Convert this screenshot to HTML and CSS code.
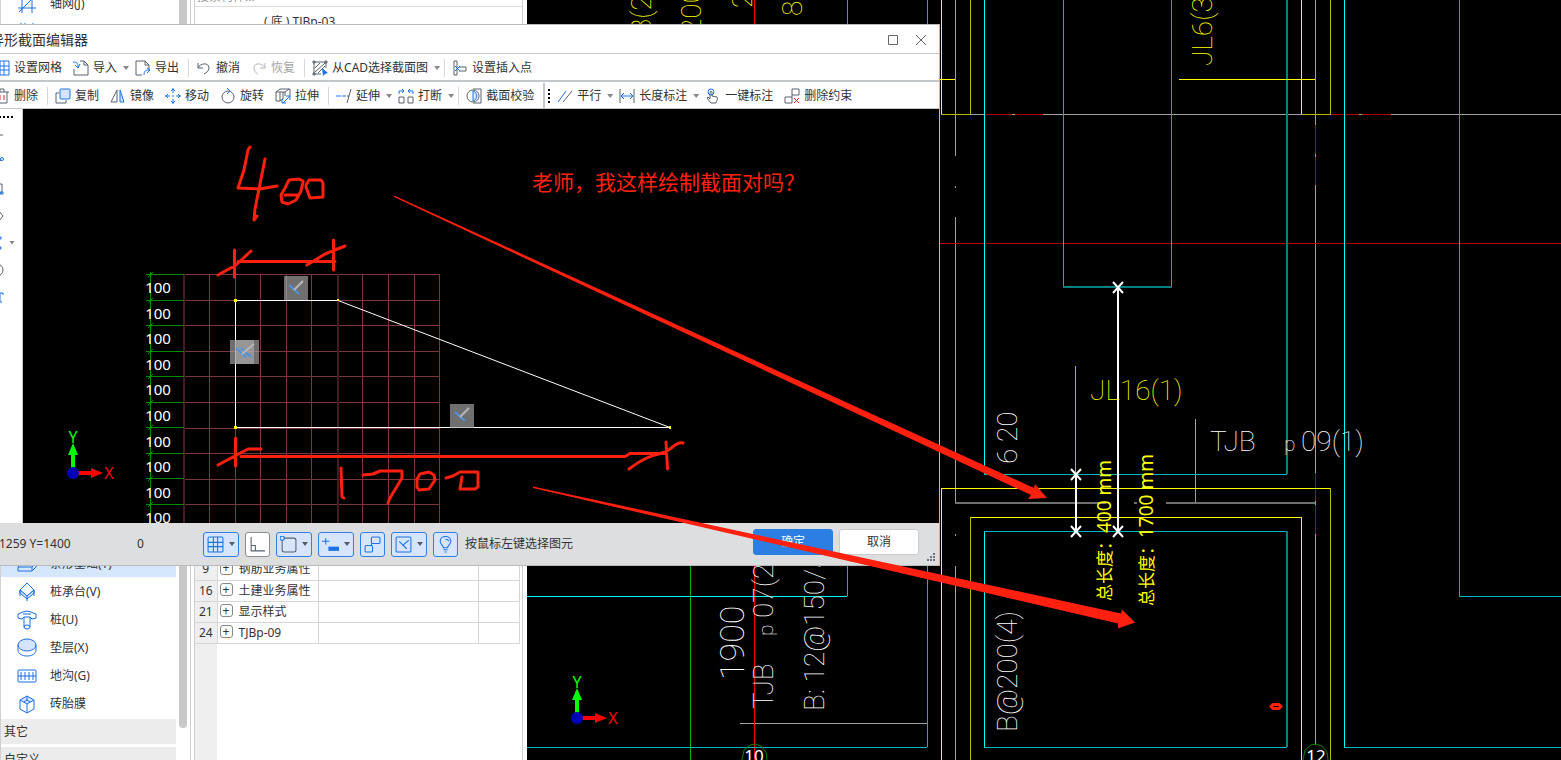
FILE: index.html
```
<!DOCTYPE html>
<html lang="zh-CN">
<head>
	<meta charset="utf-8">
	<meta name="viewport" content="width=device-width, initial-scale=1">
	<title>异形截面编辑器</title>
	<link rel="stylesheet" href="styles.css">
</head>
<body>
	<div class="app">
		<!-- component list -->
		<nav class="side">
			<div class="side-list">
				<button class="side-item"><svg class="ico-lg" viewBox="0 0 20 20"><path d="M1 5h18M1 14h18M5 0v19M15 0v19M2 18L18 2"/></svg>轴网(J)</button>
				<div class="side-item"><svg class="ico-lg" viewBox="0 0 20 20"><path d="M4 1v18M8 1v18M16 1v18M1 6h18"/></svg></div>
				<div class="side-gap"></div>
				<button class="side-item on"><svg class="ico-lg" viewBox="0 0 20 20"><path d="M1 13h14v4H1zM15 13l4-4v4l-4 4M1 13l4-4h14"/></svg>条形基础(T)</button>
				<button class="side-item"><svg class="ico-lg" viewBox="0 0 20 20"><path d="M10 1l7 7-7 6-7-6z"/><path class="tint" d="M3 8l7 6 7-6v3l-7 6-7-6z"/><path d="M3 8v6M17 8v6M10 14v5"/></svg>桩承台(V)</button>
				<button class="side-item"><svg class="ico-lg" viewBox="0 0 20 20"><path d="M1 4l5-2 4-1 4 1 5 2v4l-4 1-2-2H7L5 9 1 8zM6 4h8M7 7v10M13 7v10"/><ellipse cx="10" cy="17" rx="3" ry="2"/></svg>桩(U)</button>
				<button class="side-item"><svg class="ico-lg" viewBox="0 0 20 20"><ellipse class="tint" cx="10" cy="7" rx="9" ry="6"/><path d="M1 7v5c0 8 18 8 18 0V7"/></svg>垫层(X)</button>
				<button class="side-item"><svg class="ico-lg" viewBox="0 0 20 20"><rect x="1" y="4" width="18" height="12" rx="1"/><path d="M1 10h18M4 6v8M8 6v8M12 6v8M16 6v8"/></svg>地沟(G)</button>
				<button class="side-item"><svg class="ico-lg" viewBox="0 0 20 20"><path class="tint" d="M10 2l7 4-7 4-7-4z"/><path d="M3 6v9l7 4 7-4V6M10 10v9M10 2v4l-3 2M10 6l3 2"/></svg>砖胎膜</button>
				<div class="side-group">其它</div>
				<div class="side-group">自定义</div>
			</div>
			<div class="side-scroll"></div>
		</nav>

		<!-- component tree and properties -->
		<section class="props">
			<input class="search" type="text" placeholder="搜索构件..." aria-label="搜索构件">
			<div class="tree-item">( 底 ) TJBp-03</div>
			<div class="prop-wrap">
				<table class="prop-table">
					<tr><th>9</th><td class="name"><button class="plus">+</button>钢筋业务属性</td><td></td><td class="last"></td></tr>
					<tr><th>16</th><td class="name"><button class="plus">+</button>土建业务属性</td><td></td><td class="last"></td></tr>
					<tr><th>21</th><td class="name"><button class="plus">+</button>显示样式</td><td></td><td class="last"></td></tr>
					<tr><th>24</th><td class="name"><button class="plus">+</button>TJBp-09</td><td></td><td class="last"></td></tr>
				</table>
			</div>
		</section>

		<!-- plan drawing -->
		<main class="plan">
			<svg class="draw">
				<g transform="translate(-527,0)" shape-rendering="crispEdges">
					<g class="gray">
						<path d="M955.500 0V156M955.500 186v2M955.500 217V503M955.500 534v2M955.500 566V760M1315.500 0V745"/>
						<path d="M956 114.500H1561M740 723.500H927M1195.500 419V503"/>
						<path class="thick" d="M955 503H1106M1134 503h3M1166 503H1315"/>
					</g>
					<g class="dred">
						<path d="M985 114.500h27M1015 114.500h28M1331 114.500h28M1362 114.500h29M940 243.500H1561"/>
						<path d="M1315.500 125v29M1315.500 157v28M1315.500 473v28M1315.500 505v29"/>
						<path class="bright" d="M754.500 0V760"/>
					</g>
					<path class="green" d="M690.500 560V760"/>
					<g class="cyan">
						<path d="M984.500 0V474M1344.500 0V747M984.500 531V747M527 596.500H847"/>
						<path class="dim" d="M847.500 0V596M927.500 0V747M527 747.500H927M1063.500 0V287M1171.500 0V287M984 474.500H1287M984 531.500H1287M984 747.500H1287M1344 747.500H1561M1459.500 0V596M1459 596.500H1561"/>
						<path class="teal" d="M1063 287H1172M1287 0V474M1287 531V747"/>
					</g>
					<g class="yellow">
						<path d="M941.500 0V114M1301.500 0V114M940 79.500H955M1179 79.500H1315M941.500 760V488.500H1330M970 517.500H1301.500V760"/>
						<path class="dim" d="M970.500 0V114M1330.500 0V114M941 114.500H970M1301 114.500H1330M1330.500 488V760M970.500 517V760M1075.500 366V531"/>
					</g>
					<path class="measure" d="M1118 287V531M1076 474V531"/>
				</g>
				<g transform="translate(-527,0)">
					<path class="measure" d="M1113 282l10 11M1123 282l-10 11M1113 526l10 11M1123 526l-10 11M1071 469l10 11M1081 469l-10 11M1071 526l10 11M1081 526l-10 11"/>
					<path class="bubble" d="M742 760l2-10 6-5 5-1 6 2 5 6 1 8M1303 760l2-10 6-5 5-1 6 2 5 6 1 8"/>
					<text class="num" x="754" y="762">10</text>
					<text class="num" x="1316" y="762">12</text>

					<text class="cad y" x="1090" y="400">JL16(1)</text>
					<text class="cad" x="1210" y="451">TJB</text>
					<text class="cad sm" x="1284" y="451">p</text>
					<text class="cad" x="1301" y="451">09(1)</text>
					<text class="cad y" transform="translate(1212,66) rotate(-90)">JL6(3</text>
					<text class="cad" transform="translate(1017,464) rotate(-90)">6 20</text>
					<text class="cad" transform="translate(1017,732) rotate(-90)">B@200(4)</text>
					<text class="cad big" transform="translate(744,680) rotate(-90)">1900</text>
					<text class="cad" transform="translate(773,709) rotate(-90)">TJB</text>
					<text class="cad sm" transform="translate(773,636) rotate(-90)">p</text>
					<text class="cad" transform="translate(773,618) rotate(-90)">07(2</text>
					<text class="cad" transform="translate(824,711) rotate(-90)">B: 12@150/5</text>
					<text class="cad y" transform="translate(651,34) rotate(-90)">3(2</text>
					<text class="cad y" transform="translate(701,34) rotate(-90)">200</text>
					<text class="cad y" transform="translate(752,8) rotate(-90)">2</text>
					<text class="cad y" transform="translate(802,16) rotate(-90)">8</text>
					<text class="len" transform="translate(1111,601) rotate(-90)">总长度：<tspan class="mm">400 mm</tspan></text>
					<text class="len" transform="translate(1153,606) rotate(-90)">总长度：<tspan class="mm">1700 mm</tspan></text>

					<g transform="translate(577,718)">
						<path class="ay" d="M-2 0v-18h-3l5-12 5 12h-3V0z"/>
						<path class="ax" d="M0-2h18v-3l12 5-12 5V2H0z"/>
						<circle class="ao" r="6"/>
						<text class="ay-t" x="0" y="-30">Y</text>
						<text class="ax-t" x="36" y="6">X</text>
					</g>
				</g>
			</svg>
		</main>
	</div>

	<!-- section editor window -->
	<div class="dialog" role="dialog" aria-label="异形截面编辑器">
		<header class="title">
			<span>异形截面编辑器</span>
			<div class="win-btns">
				<button aria-label="最大化"><svg viewBox="0 0 12 12"><path d="M1.500 1.500h9v9h-9z"/></svg></button>
				<button aria-label="关闭"><svg viewBox="0 0 12 12"><path d="M1 1l10 10M11 1L1 11"/></svg></button>
			</div>
		</header>

		<div class="bar">
			<button class="tool"><svg class="ico" viewBox="0 0 16 16"><path class="b" d="M1 1h14v14H1zM1 6h14M1 10h14M6 1v14M10 1v14"/></svg>设置网格</button>
			<button class="tool drop"><svg class="ico" viewBox="0 0 16 16"><path d="M7 1h4l4 4v10H1V9M11 1v4h4"/><path class="b" d="M0 2c4 0 5 1 5 5M2 5l3 3 2-4"/></svg>导入<i class="caret"></i></button>
			<button class="tool"><svg class="ico" viewBox="0 0 16 16"><path d="M7 15H1V1h9l4 4v4M10 1v4h4"/><path class="b" d="M9 15c0-4 2-5 5-5M12 8l3 2-3 3"/></svg>导出</button>
			<span class="sep"></span>
			<button class="tool"><svg class="ico" viewBox="0 0 16 16"><path d="M2 3v5h5M2 8c2-5 11-6 11 0 0 3-3 5-5 6"/></svg>撤消</button>
			<button class="tool off" disabled><svg class="ico" viewBox="0 0 16 16"><path d="M14 3v5H9M14 8C12 3 3 2 3 8c0 3 2 5 4 6"/></svg>恢复</button>
			<span class="sep"></span>
			<button class="tool drop"><svg class="ico" viewBox="0 0 16 16"><path d="M2 2h12v6M2 2v12h7M3 8l5-5M3 12l10-9M6 13l7-7M1 1h2v2H1zM13 1h2v2h-2zM1 13h2v2H1z"/><path class="bf" d="M10 8l6 5-3 1-2 2z"/></svg>从CAD选择截面图<i class="caret"></i></button>
			<span class="sep"></span>
			<button class="tool"><svg class="ico" viewBox="0 0 16 16"><path d="M2 1h3v14H2zM7 7h7v4H7"/><path class="b" d="M3 6l5 5M8 6l-5 5"/></svg>设置插入点</button>
		</div>

		<div class="bar edit">
			<button class="tool"><svg class="ico" viewBox="0 0 16 16"><path d="M1 4h14M3 4v11h10V4M6 4V1h4v3"/><path class="r" d="M6 7v5M10 7v5"/></svg>删除</button>
			<span class="sep"></span>
			<button class="tool"><svg class="ico" viewBox="0 0 16 16"><path d="M4 5H1v10h10v-3"/><rect class="b tint" x="5" y="1" width="10" height="10" rx="1"/></svg>复制</button>
			<button class="tool"><svg class="ico" viewBox="0 0 16 16"><path d="M7 2v12H1z"/><path class="b tint" d="M10 2v12h4z"/></svg>镜像</button>
			<button class="tool"><svg class="ico" viewBox="0 0 16 16"><path class="b" d="M8 0v5M8 11v5M0 8h5M11 8h5M6 3l2-2 2 2M6 13l2 2 2-2M3 6L1 8l2 2M13 6l2 2-2 2M7 8h2"/></svg>移动</button>
			<button class="tool"><svg class="ico" viewBox="0 0 16 16"><circle cx="8" cy="9" r="6"/><path class="b" d="M7 0l3 3-3 3"/></svg>旋转</button>
			<button class="tool"><svg class="ico" viewBox="0 0 16 16"><path d="M1 4l4-3h10v7M1 4v9h4V4zM5 4h5l4-3M10 4v4M5 13l3-2V4"/><path class="b" d="M8 15l7-7M11 8h4v4M7 11v4h4"/></svg>拉伸</button>
			<span class="sep"></span>
			<button class="tool drop"><svg class="ico" viewBox="0 0 16 16"><path class="b" d="M0 8h5M6 8h4"/><path d="M11 8h2M15 1l-4 14"/></svg>延伸<i class="caret"></i></button>
			<button class="tool drop"><svg class="ico" viewBox="0 0 16 16"><path d="M1 9h5v6H1zM10 9h5v6h-5z"/><path class="b" d="M1 6V3h4M4 1l2 2-2 2M15 6V3h-4M12 1l-2 2 2 2"/></svg>打断<i class="caret"></i></button>
			<span class="sep"></span>
			<button class="tool"><svg class="ico" viewBox="0 0 16 16"><path d="M7 1h8v14H7"/><circle cx="7" cy="8" r="6"/><path class="b tint" d="M7 3v10c5-1 5-9 0-10"/></svg>截面校验</button>
			<span class="sep wide"></span>
			<span class="grip"></span>
			<button class="tool drop"><svg class="ico" viewBox="0 0 16 16"><path class="b" d="M1 14L9 3"/><path d="M6 14l9-11"/></svg>平行<i class="caret"></i></button>
			<button class="tool drop"><svg class="ico" viewBox="0 0 16 16"><path d="M1 1v14M15 1v14"/><path class="b" d="M2 8h12M5 5L2 8l3 3M11 5l3 3-3 3"/></svg>长度标注<i class="caret"></i></button>
			<button class="tool"><svg class="ico" viewBox="0 0 16 16"><circle class="b" cx="6" cy="4" r="3"/><path d="M5 11V4c0-1 2-1 2 0v4l5 1c1 1 0 4-1 6H6l-4-5 1-1z"/></svg>一键标注</button>
			<button class="tool"><svg class="ico" viewBox="0 0 16 16"><path d="M8 1h7v6H8zM1 9h7v6H1zM8 7v2"/><path class="r" d="M10 10l5 5M15 10l-5 5"/></svg>删除约束</button>
		</div>

		<div class="work">
			<div class="strip">
				<span class="grip-h"></span>
				<button aria-label="直线"><svg class="ico" viewBox="0 0 16 16"><path d="M1 8h11"/></svg></button>
				<button aria-label="折线"><svg class="ico" viewBox="0 0 16 16"><path d="M2 12l8-6"/><circle class="b" cx="11" cy="5" r="1.500"/></svg></button>
				<button aria-label="矩形"><svg class="ico" viewBox="0 0 16 16"><path d="M1 3h10v9H1z"/><path class="b" d="M9 11h3v2H9z"/></svg></button>
				<button aria-label="多边形"><svg class="ico" viewBox="0 0 16 16"><path d="M5 3h3l4 5-4 5H5"/></svg></button>
				<button aria-label="点"><svg class="ico" viewBox="0 0 16 16"><path class="b" d="M8 2h2v2H8zM8 12h2v2H8z"/></svg><i class="caret"></i></button>
				<button aria-label="圆"><svg class="ico" viewBox="0 0 16 16"><circle cx="6" cy="8" r="6"/></svg></button>
				<button aria-label="文字"><svg class="ico" viewBox="0 0 16 16"><path class="b" d="M3 6V4h9v2M9 4v9M7 13h4"/></svg></button>
			</div>
			<svg class="draw section">
				<g transform="translate(-23,-109)">
					<g shape-rendering="crispEdges">
						<path class="grid" d="M184 274.500H439M184 325.500H439M184 351.500H439M184 376.500H439M184 402.500H439M184 428.500H439M184 453.500H439M184 479.500H439M184 504.500H439M184 300.500H439M209.500 274V523M235.500 274V523M260.500 274V523M286.500 274V523M311.500 274V523M362.500 274V523M388.500 274V523M414.500 274V523M439.500 274V523"/>
						<path class="grid major" d="M184 274V523M338 274V523"/>
						<path class="ruler" d="M150.500 272V523M146 274.500h38M146 300.500h38M146 325.500h38M146 351.500h38M146 376.500h38M146 402.500h38M146 427.500h38M146 453.500h38M146 478.500h38M146 504.500h38"/>
					</g>
					<path class="ruler" d="M148 277l5-5M148 303l5-5M148 328l5-5M148 354l5-5M148 379l5-5M148 405l5-5M148 430l5-5M148 456l5-5M148 481l5-5M148 507l5-5"/>
					<g class="ticks">
						<text x="158" y="293">100</text><text x="158" y="319">100</text><text x="158" y="344">100</text>
						<text x="158" y="370">100</text><text x="158" y="395">100</text><text x="158" y="421">100</text>
						<text x="158" y="447">100</text><text x="158" y="472">100</text><text x="158" y="498">100</text><text x="158" y="523">100</text>
					</g>
					<path class="shape" d="M235.500 300.500H338L670 427.500H235.500z"/>
					<path class="node" d="M234 299h3v3h-3zM337 299h2v2h-2zM234 426h3v3h-3zM669 426h2v3h-2z"/>
					<g class="mark">
						<rect x="284" y="276" width="24" height="24"/><path class="mb" d="M289 285l10 9"/><path d="M294 290l9-9"/>
						<rect x="230" y="340" width="24" height="24"/><rect x="235" y="340" width="24" height="24"/><path class="mb" d="M236 348l10 9M241 348l10 9"/><path d="M242 354l12-10"/>
						<rect x="450" y="404" width="24" height="24"/><path class="mb" d="M455 412l10 9"/><path d="M460 417l9-9"/>
					</g>
					<g transform="translate(73,473)">
						<path class="ay" d="M-2 0v-18h-3l5-12 5 12h-3V0z"/>
						<path class="ax" d="M0-2h18v-3l12 5-12 5V2H0z"/>
						<circle class="ao" r="6"/>
						<text class="ay-t" x="0" y="-30">Y</text>
						<text class="ax-t" x="36" y="6">X</text>
					</g>
				</g>
			</svg>
		</div>

		<footer class="status">
			<span class="coord">1259 Y=1400</span>
			<span class="zero">0</span>
			<div class="snaps">
				<button class="snap on" aria-label="网格"><svg class="ico" viewBox="0 0 16 16"><rect class="b" x="1" y="1" width="14" height="14" rx="1"/><path class="b" d="M1 6h14M1 10h14M6 1v14M10 1v14"/></svg><i class="caret"></i></button>
				<button class="snap" aria-label="正交"><svg class="ico" viewBox="0 0 16 16"><path d="M2 1v13h13M2 9h4v5"/></svg></button>
				<button class="snap on" aria-label="对象捕捉"><svg class="ico" viewBox="0 0 16 16"><rect x="2" y="2" width="13" height="13" rx="2"/><circle class="b tint" cx="2" cy="2" r="2"/></svg><i class="caret"></i></button>
				<button class="snap on" aria-label="动态输入"><svg class="ico" viewBox="0 0 16 16"><path class="b" d="M0 5h7M3.500 2v6"/><path class="bf" d="M6 10h10v4H6z"/></svg><i class="caret"></i></button>
				<button class="snap on" aria-label="约束"><svg class="ico" viewBox="0 0 16 16"><rect class="b" x="7" y="1" width="8" height="6" rx="1"/><rect class="b" x="1" y="9" width="7" height="6" rx="1"/><path class="b" d="M7 7v2"/></svg></button>
				<button class="snap on" aria-label="垂直约束"><svg class="ico" viewBox="0 0 16 16"><rect class="b" x="1" y="1" width="14" height="14" rx="1"/><path class="b" d="M4 5l7 7M7 9l6-5"/></svg><i class="caret"></i></button>
				<button class="snap on" aria-label="提示"><svg class="ico" viewBox="0 0 16 16"><path class="b" d="M6 11c0-2-3-3-3-6 0-6 10-6 10 0 0 3-3 4-3 6zM6 13h4M7 15h2M8 3c2 0 3 1 3 2"/></svg></button>
			</div>
			<span class="hint">按鼠标左键选择图元</span>
			<div class="acts">
				<button class="btn ok">确定</button>
				<button class="btn">取消</button>
			</div>
			<svg class="corner" viewBox="0 0 9 9"><path d="M6 0h2v2H6zM3 3h2v2H3zM6 3h2v2H6zM0 6h2v2H0zM3 6h2v2H3zM6 6h2v2H6z"/></svg>
		</footer>
	</div>

	<!-- red pen notes over everything -->
	<svg class="notes">
		<g class="pen">
			<path d="M250 147l-2 3-4 20-6 18 22 1 17-3M265 159l-6 30-4 20-1 11 3-4"/>
			<path d="M285 195h12M303 181l-4-2-10 1-4 8-4 7 1 7 6 2 8-4 5-9 2-9zM306 185l3-5h12l2 3v14l-13 1-4-11"/>
			<path d="M234.500 250v27M218 275l18-10 15-14M307 265l18-11 20-8M333.500 240v30"/>
			<path class="rule" d="M238 261.500h97M241 456.500h384l5-3h36"/>
			<path d="M235.500 438v28M218 465l30-16h13M629 469c20-15 26-13 36-17 7-3 12-11 18-9M666 442l1.500 27"/>
			<path d="M341 468l1 29 2 1M363 475l10-1 7-3h22v7l-12 20-2 5M420 474l9-2 5 3 1 5-6 9-10 1-2-3v-8zM446 478l7-2 7-4h18v15l-3 2h-15l2-12"/>
			<path d="M1273 704.500h6l2 2-2 2h-6l-2-2z"/>
		</g>
		<path class="arrow" d="M394 195.500L1034 488l1-4 12 14-19 1 3-4L394 197zM533 486.500l588 127 1-4 13 13-17 6v-5L533 488z"/>
		<text class="ask" x="532" y="190">老师，我这样绘制截面对吗？</text>
	</svg>
</body>
</html>
```
FILE: styles.css
```
*{
	box-sizing: border-box;
}
body{
	margin: 0;
	height: 100vh;
	overflow: hidden;
	position: relative;
	background-color: #fff;
	color: #333;
	font-family: "Noto Sans", "Noto Sans CJK SC", sans-serif;
	font-size: 12px;
	line-height: 16px;
}
button{
	font: inherit;
	color: inherit;
	background: none;
	border: 0;
	padding: 0;
	margin: 0;
}
svg{
	flex: none;
	fill: none;
}
.app{
	display: flex;
	height: 100%;
}

/* left list */
.side{
	display: flex;
	flex: none;
	width: 191px;
	height: 100%;
	overflow: hidden;
	border-left: 1px solid #d0d0d0;
	border-right: 1px solid #d0d0d0;
}
.side-list{
	width: 175px;
	margin-top: -11px;
}
.side-item{
	display: flex;
	align-items: center;
	gap: 13px;
	width: 100%;
	height: 28px;
	padding: 2px 0 0 16px;
	text-align: left;
}
.side-item.on{
	background-color: #d5e7fd;
}
.side-gap{
	height: 504px;
}
.side-group{
	height: 25px;
	margin: 2px 0 3px;
	padding: 5px 3px;
	background-color: #ececec;
}
.side-scroll{
	width: 8px;
	height: 728px;
	margin-left: 3px;
	border-radius: 0 0 4px 4px;
	background-color: #c8c8c8;
}
.ico-lg{
	width: 20px;
	height: 20px;
	stroke: #1a6fe0;
}
.tint{
	fill: #d5e4fa;
}

/* properties */
.props{
	display: flex;
	flex-direction: column;
	flex: none;
	width: 329px;
	margin-left: 3px;
	margin-right: 4px;
	border-left: 1px solid #d0d0d0;
	border-right: 1px solid #d0d0d0;
}
.search{
	flex: none;
	height: 20px;
	margin-top: -13px;
	padding: 0 2px;
	border: 0;
	border-bottom: 1px solid #ddd;
	font: inherit;
}
.search::placeholder{
	color: #999;
}
.tree-item{
	height: 30px;
	padding: 7px 0 6px 69px;
}
.prop-wrap{
	flex: 1;
	margin-top: 522px;
	background: linear-gradient(to right, #efefef 22px, #fff 22px);
}
.prop-table{
	width: 325px;
	border-collapse: collapse;
	table-layout: fixed;
}
.prop-table th, .prop-table td{
	height: 21px;
	padding: 0;
	border-right: 1px solid #d6d6d6;
	border-bottom: 1px solid #d6d6d6;
	font-weight: normal;
	white-space: nowrap;
}
.prop-table th{
	width: 22px;
	background-color: #efefef;
}
.prop-table .name{
	width: 101px;
}
.prop-table .last{
	width: 41px;
}
.plus{
	width: 13px;
	height: 13px;
	margin: 0 6px 0 2px;
	border: 1px solid #888;
	border-radius: 3px;
	line-height: 10px;
	vertical-align: 1px;
}

/* drawings */
.plan{
	flex: 1;
	min-width: 0;
	background-color: #000;
}
.draw{
	display: block;
	width: 100%;
	height: 100%;
	background-color: #000;
}
.gray{ stroke: #a0a0a0; }
.gray .thick{ stroke: #707070; stroke-width: 2; }
.dred{ stroke: #b80000; }
.dred .bright{ stroke: #f00; }
.green{ stroke: #00b800; }
.cyan{ stroke: #00ffff; }
.cyan .dim{ stroke: #00b8b8; }
.cyan .teal{ stroke: #008080; stroke-width: 2; }
.yellow{ stroke: #ffff00; }
.yellow .dim{ stroke: #b8b800; }
.measure{
	stroke: #fff;
	stroke-width: 2;
}
.bubble{ stroke: #008000; }
.num{
	fill: #fff;
	font-size: 17px;
	text-anchor: middle;
}
.cad{
	fill: #fff;
	font-family: Roboto, sans-serif;
	font-size: 28px;
	font-weight: 100;
	white-space: pre;
}
.cad.sm{ font-size: 21px; }
.cad.big{ font-size: 34px; }
.cad.y{ fill: #ffff00; }
.len{
	fill: #ffff00;
	font-size: 17px;
}
.mm{ font-size: 19px; }
.ay{ fill: #0f0; }
.ax{ fill: #f00; }
.ao{ fill: #0000b8; }
.ay-t, .ax-t{
	font-size: 16px;
	text-anchor: middle;
	fill: #0f0;
}
.ax-t{ fill: #f00; }

/* editor window */
.dialog{
	position: absolute;
	top: 24px;
	left: -20px;
	width: 960px;
	border: 1px solid #b8babc;
	background-color: #fff;
}
.title{
	display: flex;
	justify-content: space-between;
	align-items: center;
	height: 29px;
	padding: 2px 12px 0 9px;
	border-bottom: 1px solid #c3c6ca;
	font-size: 14px;
}
.win-btns{
	display: flex;
	gap: 16px;
}
.win-btns svg{
	display: block;
	width: 12px;
	height: 12px;
	stroke: #666;
}
.bar{
	display: flex;
	align-items: center;
	height: 28px;
	padding: 2px 0 0 7px;
	border-bottom: 2px solid #c3c8cc;
}
.bar.edit{
	height: 27px;
	border-bottom-width: 1px;
}
.tool{
	display: flex;
	align-items: center;
	gap: 4px;
	height: 24px;
	padding: 0 5px 0 6px;
	white-space: nowrap;
}
.tool.drop{
	padding-right: 0;
}
.tool.off{
	opacity: .45;
}
.ico{
	width: 16px;
	height: 16px;
	stroke: #59606e;
}
.ico .b{ stroke: #1a73e8; }
.ico .r{ stroke: #d22; }
.ico .bf{ fill: #1a73e8; stroke: none; }
.caret{
	width: 6px;
	height: 4px;
	margin-left: 2px;
	background-color: #888;
	clip-path: polygon(0 0, 100% 0, 50% 100%);
}
.sep{
	width: 1px;
	height: 18px;
	margin: 0 1px 0 4px;
	background-color: #d8d8d8;
}
.sep.wide{
	width: 2px;
	height: 26px;
	background-color: #c3c8cc;
}
.grip{
	width: 2px;
	height: 14px;
	margin: 0 1px 0 2px;
	background: repeating-linear-gradient(#000 0 2px, #fff 2px 4px);
}
.work{
	display: flex;
	height: 414px;
}
.strip{
	flex: none;
	display: flex;
	flex-direction: column;
	width: 42px;
	padding: 7px 0 0 10px;
	border-right: 1px solid #c3c8cc;
}
.strip button{
	display: flex;
	align-items: center;
	height: 27px;
}
.grip-h{
	width: 24px;
	height: 2px;
	margin-bottom: 3px;
	background: repeating-linear-gradient(to right, #000 0 2px, #fff 2px 4px);
}
.section{
	flex: 1;
	width: auto;
	min-width: 0;
}
.grid{ stroke: #7a383e; }
.grid.major{ stroke: #421c1f; stroke-width: 2; }
.ruler{ stroke: #008a00; }
.ticks{
	fill: #fff;
	font-size: 15px;
	text-anchor: middle;
}
.shape{ stroke: #fff; }
.node{ fill: #ff0; }
.mark{ stroke: #b8b8b8; stroke-width: 2; }
.mark rect{ fill: #aaa; fill-opacity: .65; stroke: none; }
.mark .mb{ stroke: #4d94e0; }

.status{
	display: flex;
	align-items: center;
	position: relative;
	height: 42px;
	padding: 0 20px 0 18px;
	background-color: #dddee0;
}
.coord{ width: 138px; }
.zero{ width: 66px; }
.snaps{
	display: flex;
	gap: 6px;
}
.snap{
	display: flex;
	align-items: center;
	gap: 3px;
	height: 25px;
	padding: 0 3px;
	border: 1px solid #8c8c8c;
	border-radius: 3px;
	background-color: #fff;
}
.snap.on{
	border-color: #2f80e4;
	background-color: #d6e5fb;
}
.snap .ico{
	width: 17px;
	height: 17px;
}
.snap .caret{
	background-color: #555b66;
}
.hint{
	margin-left: 7px;
}
.acts{
	display: flex;
	gap: 6px;
	margin: 0 0 4px auto;
}
.btn{
	width: 80px;
	height: 26px;
	border: 1px solid #ccc;
	border-radius: 3px;
	background-color: #fff;
}
.btn.ok{
	border-color: #2b7fe3;
	background-color: #2b7fe3;
	color: #fff;
}
.corner{
	position: absolute;
	right: 3px;
	bottom: 3px;
	width: 9px;
	height: 9px;
	fill: #70757d;
}

/* pen notes */
.notes{
	position: absolute;
	top: 0;
	left: 0;
	width: 100%;
	height: 100%;
	pointer-events: none;
}
.pen{
	stroke: #ff2010;
	stroke-width: 3;
	stroke-linecap: round;
	stroke-linejoin: round;
}
.arrow, .ask{ fill: #ff2010; }
.ask{ font-size: 21px; }
```
